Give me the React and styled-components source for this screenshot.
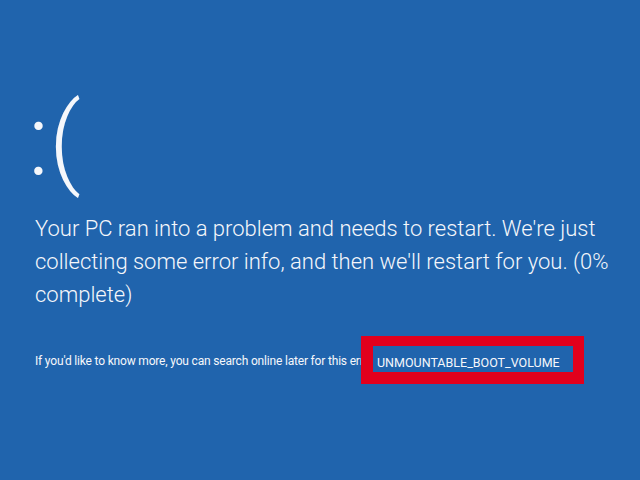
import React from "react";
import styled, { createGlobalStyle } from "styled-components";

const Global = createGlobalStyle`
  html, body { margin: 0; padding: 0; background: #2064ad; }
  body { font-family: Roboto, "Open Sans", sans-serif; color: #f5f7fb; }
`;

const Screen = styled.main`
  width: 640px;
  height: 480px;
  box-sizing: border-box;
  background: #2064ad;
  padding: 91px 0 0 35px;
  display: flex;
  flex-direction: column;
  overflow: hidden;
`;

const Frown = styled.div`
  font-weight: 300;
  font-size: 100px;
  line-height: 100px;
  height: 100px;
  margin-left: -7px;
`;

const Message = styled.p`
  margin: 21px 0 0 0;
  font-weight: 300;
  font-size: 22px;
  line-height: 33px;
  width: 590px;
`;

const InfoRow = styled.div`
  margin-top: 25px;
  display: flex;
  align-items: flex-start;
`;

const InfoText = styled.span`
  margin-top: 18px;
  width: 326px;
  overflow: hidden;
  white-space: nowrap;
  font-size: 12px;
  line-height: 14px;
  letter-spacing: -0.18px;
  font-weight: 400;
`;

const Highlight = styled.div`
  border-style: solid;
  border-color: #e2001c;
  border-width: 10px 11px 12px 12px;
  width: 196px;
  height: 18px;
  padding: 8px 0 0 4px;
  box-sizing: content-box;
`;

const StopCode = styled.span`
  display: block;
  font-size: 12.5px;
  line-height: 18px;
  white-space: nowrap;
`;

export default function App() {
  return (
    <>
      <Global />
      <Screen>
        <Frown>:(</Frown>
        <Message>
          Your PC ran into a problem and needs to restart. We're just collecting
          some error info, and then we'll restart for you. (0% complete)
        </Message>
        <InfoRow>
          <InfoText>
            If you'd like to know more, you can search online later for this error:
          </InfoText>
          <Highlight>
            <StopCode>UNMOUNTABLE_BOOT_VOLUME</StopCode>
          </Highlight>
        </InfoRow>
      </Screen>
    </>
  );
}
